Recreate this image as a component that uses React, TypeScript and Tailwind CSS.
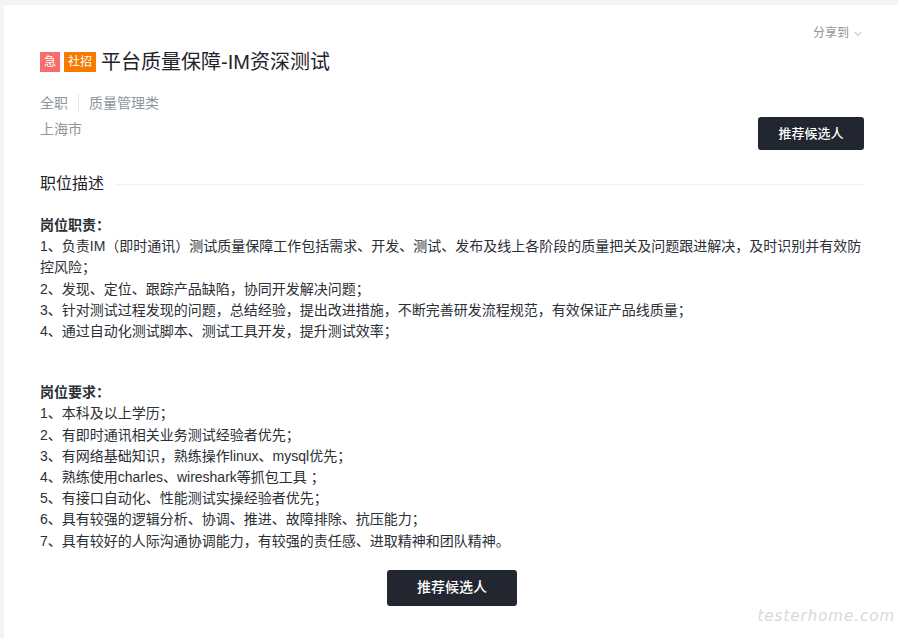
import React from 'react';
import { ChevronDown } from 'lucide-react';

const duties = [
  '1、负责IM（即时通讯）测试质量保障工作包括需求、开发、测试、发布及线上各阶段的质量把关及问题跟进解决，及时识别并有效防控风险；',
  '2、发现、定位、跟踪产品缺陷，协同开发解决问题；',
  '3、针对测试过程发现的问题，总结经验，提出改进措施，不断完善研发流程规范，有效保证产品线质量；',
  '4、通过自动化测试脚本、测试工具开发，提升测试效率；',
];

const requirements = [
  '1、本科及以上学历；',
  '2、有即时通讯相关业务测试经验者优先；',
  '3、有网络基础知识，熟练操作linux、mysql优先；',
  '4、熟练使用charles、wireshark等抓包工具 ；',
  '5、有接口自动化、性能测试实操经验者优先；',
  '6、具有较强的逻辑分析、协调、推进、故障排除、抗压能力；',
  '7、具有较好的人际沟通协调能力，有较强的责任感、进取精神和团队精神。',
];

const App: React.FC = () => {
  return (
    <div
      lang="zh-CN"
      className="min-h-screen bg-[#f4f4f5] pt-[5px] pl-[4px] relative overflow-hidden antialiased"
      style={{ fontFamily: '"Liberation Sans", "Noto Sans CJK SC", sans-serif' }}
    >
      <div className="bg-white min-h-[634px] pl-9 pr-[34px] pt-[18px] pb-8">
        {/* header */}
        <div className="flex justify-between items-start">
          <div className="pt-[25px]">
            <div className="flex items-center h-7">
              <span className="w-5 h-5 bg-[#f46f6b] text-white text-[12px] leading-5 text-center">急</span>
              <span className="ml-1 w-8 h-5 bg-[#f67b00] text-white text-[12px] leading-5 text-center">社招</span>
              <h1 className="ml-[5px] text-[20px] leading-7 text-[#1f2329]">平台质量保障-IM资深测试</h1>
            </div>
            <div className="mt-4 flex items-center text-[14px] leading-[22px] text-[#8f959e]">
              <span>全职</span>
              <span className="mx-[10px] w-px h-[18px] bg-[#e4e6e9]"></span>
              <span>质量管理类</span>
            </div>
            <div className="mt-1 text-[14px] leading-[22px] text-[#8f959e]">上海市</div>
          </div>
          <div className="flex flex-col items-end">
            <div className="flex items-center text-[12px] leading-5 text-[#8f959e]">
              分享到
              <ChevronDown size={12} strokeWidth={1.6} className="ml-[3px] mt-px" />
            </div>
            <button className="mt-[74px] w-[106px] h-[33px] rounded-[3px] bg-[#212630] text-white text-[13px] font-medium">
              推荐候选人
            </button>
          </div>
        </div>

        {/* section title */}
        <div className="mt-[22px] flex items-center">
          <h2 className="text-[16px] leading-6 text-[#1f2329] shrink-0">职位描述</h2>
          <div className="ml-3 flex-1 h-px bg-[#eef0f2]"></div>
        </div>

        {/* description */}
        <div className="mt-[19px] text-[14px] leading-[21.2px] text-[#2b2f36]">
          <p className="font-semibold">岗位职责：</p>
          {duties.map((d) => (
            <p key={d}>{d}</p>
          ))}
          <p className="h-[20px]"></p>
          <p className="h-[20px]"></p>
          <p className="font-semibold">岗位要求：</p>
          {requirements.map((r) => (
            <p key={r}>{r}</p>
          ))}
        </div>

        <div className="mt-[18px] flex justify-center">
          <button className="w-[130px] h-9 rounded-[3px] bg-[#212630] text-white text-[14px] font-medium">
            推荐候选人
          </button>
        </div>
      </div>

      <div
        className="absolute right-[3px] bottom-[12px] text-[15px] italic font-extralight text-[#d9d9d9] tracking-[1px] select-none"
        style={{ fontFamily: '"DejaVu Sans", sans-serif' }}
      >
        testerhome.com
      </div>
    </div>
  );
};

export default App;
